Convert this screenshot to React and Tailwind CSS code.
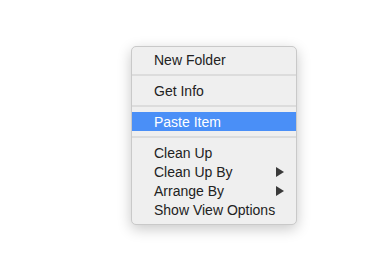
import React from "react";

function Arrow() {
  return (
    <svg width="8" height="10" viewBox="0 0 8 10" className="mr-[12px]">
      <path d="M0 0 L8 5 L0 10 Z" fill="#3a3a3a" />
    </svg>
  );
}

function Item({ label, active, sub }) {
  return (
    <div
      className={
        "flex h-[19px] items-center justify-between pl-[22px] " +
        (active ? "bg-[#4a8ff7] text-white" : "text-[#222222]")
      }
    >
      <span>{label}</span>
      {sub && <Arrow />}
    </div>
  );
}

function Sep() {
  return (
    <div className="flex h-[12px] items-center">
      <div className="h-[2px] w-full bg-[#dcdcdc]" />
    </div>
  );
}

function App() {
  return (
    <div className="h-[255px] w-[382px] bg-white pl-[131px] pt-[46px] font-['Liberation_Sans',Arial,sans-serif] text-[14px] leading-none">
      <div className="w-[166px] overflow-hidden rounded-[5px] border border-[#c9c9c9] bg-[#efefef] pt-[3px] pb-[5px] shadow-[0_4px_14px_rgba(0,0,0,0.22)]">
        <Item label="New Folder" />
        <Sep />
        <Item label="Get Info" />
        <Sep />
        <Item label="Paste Item" active />
        <Sep />
        <Item label="Clean Up" />
        <Item label="Clean Up By" sub />
        <Item label="Arrange By" sub />
        <Item label="Show View Options" />
      </div>
    </div>
  );
}

export default App;
